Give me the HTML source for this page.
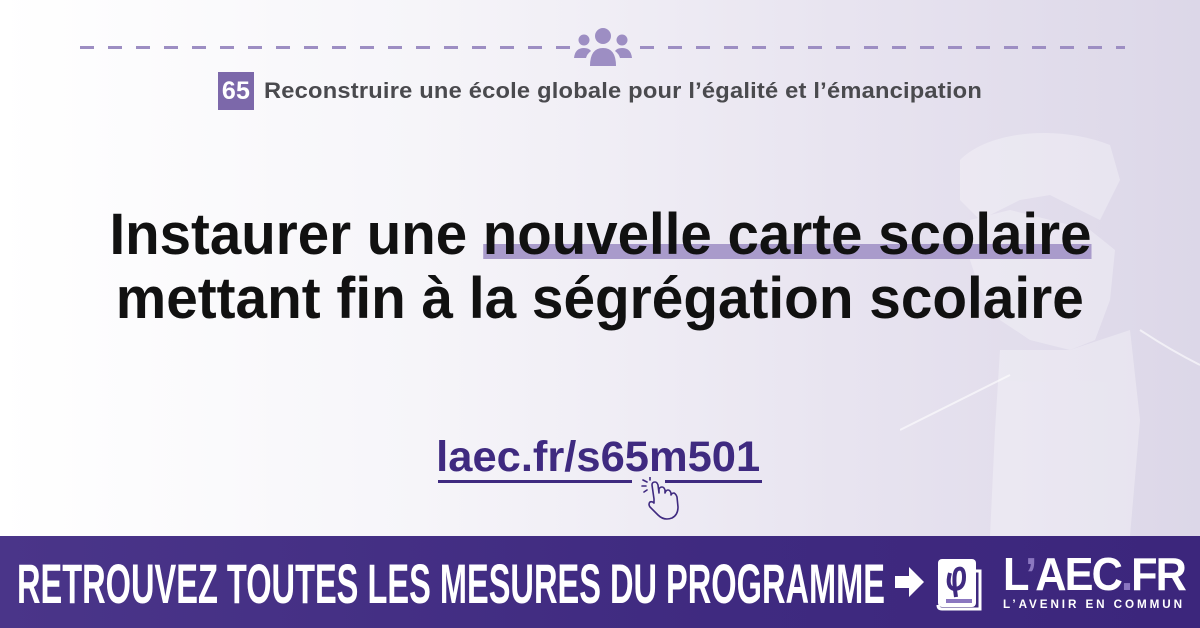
<!DOCTYPE html>
<html><head><meta charset="utf-8"><style>
*{margin:0;padding:0;box-sizing:border-box}
body{width:1200px;height:628px;overflow:hidden;position:relative;font-family:"Liberation Sans",sans-serif;background:linear-gradient(90deg,#ffffff 0%,#f6f5f9 35%,#e8e4f0 70%,#dcd7e8 100%)}
.abs{position:absolute}
.dash{top:46px;height:3px;background:repeating-linear-gradient(90deg,#9d8ec3 0 14px,transparent 14px 28px)}
.sub{left:218px;top:72px;height:38px;display:flex;align-items:center;gap:10px;font-size:22.5px;letter-spacing:0.2px;font-weight:bold;color:#4a4a4e;white-space:nowrap}
.num{width:36px;height:38px;flex:none;background:#7c68aa;color:#fff;font-family:"Liberation Sans Narrow","Liberation Sans",sans-serif;font-size:25px;font-weight:bold;display:flex;align-items:center;justify-content:center}
.h{position:absolute;left:600px;font-size:58px;line-height:64px;font-weight:bold;color:#111;white-space:nowrap;transform-origin:center top}
.hl{background:linear-gradient(180deg,transparent 0 42px,#a99bcb 42px 57px,transparent 57px)}
.url{left:438px;top:433px;font-size:43px;font-weight:bold;color:#3f2a80;white-space:nowrap}
.bar{left:0;top:536px;width:1200px;height:92px;background:linear-gradient(90deg,#4a3589,#3f2a80 60%,#3c267c)}
.cta{left:17px;top:556px;font-family:"Liberation Sans Narrow","Liberation Sans",sans-serif;font-weight:bold;font-size:56px;line-height:56px;color:#fff;white-space:nowrap;transform-origin:left top}
</style></head><body>
<svg class="abs" style="left:900px;top:100px" width="300" height="436" viewBox="0 0 300 436">
<g fill="#ffffff" opacity="0.3">
<path d="M60 60 C90 30 160 25 210 45 L220 80 L200 120 L180 110 L150 95 L120 100 L80 120 L60 100 Z"/>
<path d="M70 120 L110 110 L150 120 L190 130 L215 150 L210 200 L195 240 L170 250 L130 240 L100 220 L80 190 L70 160 Z"/>
<path d="M100 250 L170 250 L230 230 L240 320 L230 436 L90 436 L95 330 Z"/>
</g>
<path d="M0 330 Q60 300 110 275" stroke="#fff" stroke-width="2" fill="none" opacity="0.6"/>
<path d="M240 230 Q270 250 300 265" stroke="#fff" stroke-width="2" fill="none" opacity="0.6"/>
</svg>
<div class="abs dash" style="left:80px;width:490px"></div>
<div class="abs dash" style="left:640px;width:485px"></div>
<svg class="abs" style="left:572px;top:26px" width="62" height="42" viewBox="0 0 62 42">
<g fill="#9d8ec3"><circle cx="31" cy="10" r="8"/><circle cx="12" cy="14" r="5.5"/><circle cx="50" cy="14" r="5.5"/>
<path d="M18 40 Q18 22 31 22 Q44 22 44 40 Z"/><path d="M2 32 Q3 22 12 22 Q17 22 19 25 Q15 28 14 32 Z"/><path d="M60 32 Q59 22 50 22 Q45 22 43 25 Q47 28 48 32 Z"/></g>
</svg>
<div class="abs sub"><div class="num">65</div><span id="subt" style="transform-origin:left center;display:inline-block">Reconstruire une école globale pour l’égalité et l’émancipation</span></div>
<div class="h" id="h1" style="top:203px">Instaurer une <span class="hl">nouvelle carte scolaire</span></div>
<div class="h" id="h2" style="top:267px">mettant fin à la ségrégation scolaire</div>
<div class="abs url" id="url">laec.fr/s65m501</div>
<div class="abs" style="left:438px;top:480px;width:194px;height:3px;background:#3f2a80"></div>
<div class="abs" style="left:665px;top:480px;width:97px;height:3px;background:#3f2a80"></div>
<svg class="abs" style="left:640px;top:477px" width="50" height="45" viewBox="0 0 50 45" fill="none" stroke="#3f2a80" stroke-width="1.6" stroke-linecap="round" stroke-linejoin="round">
<path d="M3 3 L7 5 M2 9 L6 9 M4 15 L7 13 M10 0 L10 3"/>
<path d="M14 22 L12 8 Q12 5 15 5 Q17 5 18 8 L19 16 L19 12 Q20 10 22 10 Q24 10 25 13 L25 16 Q26 13 28 13 Q30 13 31 16 L31 18 Q32 16 34 16 Q36 17 37 20 L38 30 Q38 38 32 41 Q24 44 18 38 L10 30 Q8 27 10 25 Q12 24 14 26 Z"/>
</svg>
<div class="abs bar"></div>
<div class="abs cta" id="cta">RETROUVEZ TOUTES LES MESURES DU PROGRAMME</div>
<svg class="abs" style="left:895px;top:565px" width="30" height="34" viewBox="0 0 30 34"><path d="M0 11 H14 V2 L29 17 L14 32 V23 H0 Z" fill="#fff"/></svg>
<svg class="abs" style="left:936px;top:557px" width="66" height="56" viewBox="0 0 66 56">
<rect x="2" y="2" width="38" height="48" rx="4" fill="#fff"/>
<path d="M40 14 H44 V52 H6 Q2 52 2 48" stroke="#fff" stroke-width="3" fill="none"/>
<rect x="10" y="42" width="26" height="4" fill="#8b77c0"/>
<path d="M14 16 Q10 30 18 32 Q28 32 28 20 Q28 10 22 12 Q16 14 20 40" stroke="#3f2a80" stroke-width="4" fill="none"/>
</svg>
<div class="abs" id="logo" style="left:1003px;top:550px;font-size:46px;font-weight:900;color:#fff;letter-spacing:-2px;line-height:48px;white-space:nowrap;transform-origin:left top">L<span style="color:#8b77c0">’</span>AEC<span style="color:#8b77c0">.</span>FR</div>
<div class="abs" id="tag" style="left:1003px;top:597px;font-size:12px;font-weight:bold;color:#fff;letter-spacing:3px;white-space:nowrap;transform-origin:left top">L’AVENIR EN COMMUN</div>
<script>
function fit(id,w,center){var e=document.getElementById(id);var r=e.getBoundingClientRect().width;var s=w/r;
if(center){e.style.left=(600-r/2)+'px';e.style.transformOrigin='center top';}
e.style.transform='scaleX('+s+')';}
fit('cta',868);fit('h1',982,1);fit('h2',968,1);fit('subt',718);fit('url',324);fit('logo',182);fit('tag',182);
</script>
</body></html>
